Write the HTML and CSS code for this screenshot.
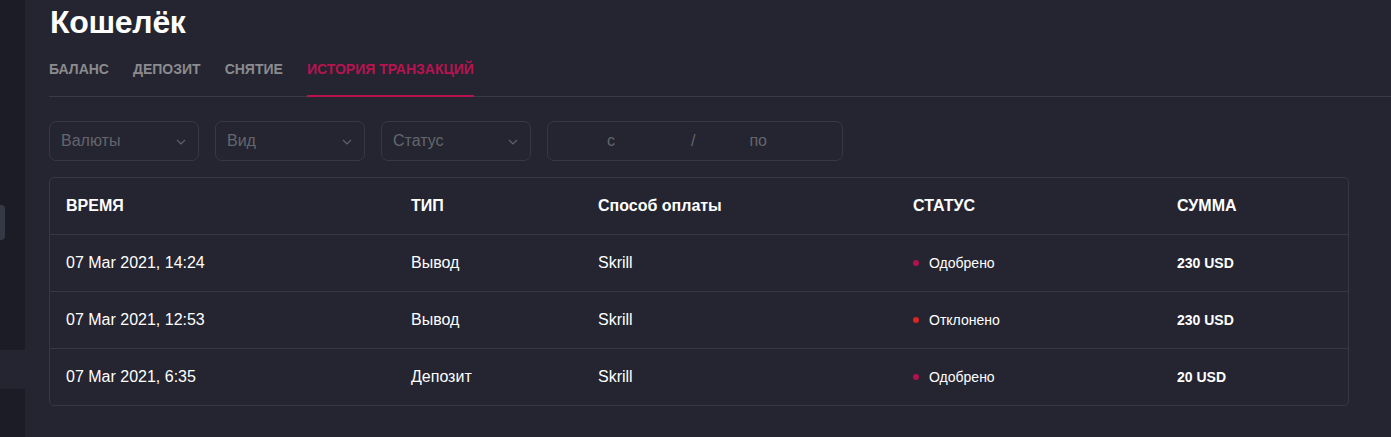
FILE: index.html
```html
<!DOCTYPE html>
<html lang="ru">
<head>
<meta charset="utf-8">
<link rel="stylesheet" href="styles.css">
</head>
<body>
<div class="app">
  <aside class="sidebar">
    <div class="side-top"></div>
    <div class="side-gap"></div>
    <div class="side-bottom"></div>
    <span class="side-pill"></span>
  </aside>
  <main class="main">
    <h1 class="title">Кошелёк</h1>
    <nav class="tabs">
      <a class="tab">Баланс</a>
      <a class="tab">Депозит</a>
      <a class="tab">Снятие</a>
      <a class="tab active">История транзакций</a>
    </nav>
    <div class="filters">
      <div class="select"><span>Валюты</span><svg class="chev" viewBox="0 0 10 6" width="10" height="6"><path d="M1 1l4 4 4-4" fill="none" stroke="#5f616b" stroke-width="1.2"/></svg></div>
      <div class="select"><span>Вид</span><svg class="chev" viewBox="0 0 10 6" width="10" height="6"><path d="M1 1l4 4 4-4" fill="none" stroke="#5f616b" stroke-width="1.2"/></svg></div>
      <div class="select"><span>Статус</span><svg class="chev" viewBox="0 0 10 6" width="10" height="6"><path d="M1 1l4 4 4-4" fill="none" stroke="#5f616b" stroke-width="1.2"/></svg></div>
      <div class="range"><span class="from">с</span><span class="sep">/</span><span class="to">по</span></div>
    </div>
    <div class="table">
      <div class="row head">
        <div>ВРЕМЯ</div><div>ТИП</div><div>Способ оплаты</div><div>СТАТУС</div><div>СУММА</div>
      </div>
      <div class="row">
        <div>07 Mar 2021, 14:24</div><div>Вывод</div><div>Skrill</div><div class="status"><i class="dot ok"></i>Одобрено</div><div class="sum">230 USD</div>
      </div>
      <div class="row">
        <div>07 Mar 2021, 12:53</div><div>Вывод</div><div>Skrill</div><div class="status"><i class="dot bad"></i>Отклонено</div><div class="sum">230 USD</div>
      </div>
      <div class="row">
        <div>07 Mar 2021, 6:35</div><div>Депозит</div><div>Skrill</div><div class="status"><i class="dot ok"></i>Одобрено</div><div class="sum">20 USD</div>
      </div>
    </div>
  </main>
</div>
</body>
</html>
```
FILE: styles.css
```css
* { box-sizing: border-box; }
html, body { margin: 0; padding: 0; }
body {
  background: #242531;
  font-family: "Liberation Sans", Arial, sans-serif;
  color: #ffffff;
  width: 1391px;
  height: 437px;
  overflow: hidden;
}
.app { display: flex; height: 437px; }
.sidebar {
  width: 25px;
  flex: none;
  display: flex;
  flex-direction: column;
  position: relative;
}
.side-top { height: 350px; background: #1b1c25; }
.side-gap { height: 39px; background: #242531; }
.side-bottom { flex: 1; background: #1b1c25; }
.side-pill {
  position: absolute;
  left: 0; top: 205px;
  width: 5px; height: 35px;
  background: #353845;
  border-radius: 0 4px 4px 0;
}
.main {
  flex: 1;
  padding: 0 0 0 24px;
}
.title {
  margin: 0;
  padding-top: 4px;
  font-size: 32px;
  line-height: 36px;
  font-weight: 700;
  padding-left: 1px;
  letter-spacing: -0.3px;
}
.tabs {
  display: flex;
  gap: 24px;
  margin-top: 14px;
  border-bottom: 1px solid #393a47;
}
.tab {
  font-size: 14px;
  font-weight: 700;
  text-transform: uppercase;
  color: #8b8b8f;
  padding: 7px 0 18px;
  line-height: 16px;
  border-bottom: 2px solid transparent;
  margin-bottom: -1px;
}
.tab.active { color: #b8134f; border-bottom-color: #b8134f; }
.filters {
  display: flex;
  gap: 16px;
  margin-top: 24px;
}
.select, .range {
  height: 40px;
  border: 1px solid #363845;
  border-radius: 7px;
  display: flex;
  align-items: center;
  color: #64656c;
  font-size: 16px;
}
.select {
  width: 150px;
  padding: 0 12px 0 11px;
  justify-content: space-between;
}
.chev { margin-top: 1px; }
.range { width: 296px; }
.range .from { margin-left: 59px; }
.range .sep { margin-left: 76px; }
.range .to { margin-left: 54px; }
.table {
  margin-top: 16px;
  width: 1300px;
  border: 1px solid #363845;
  border-radius: 5px;
}
.row {
  display: grid;
  grid-template-columns: 345px 187px 315px 264px 1fr;
  padding-left: 16px;
  height: 57px;
  align-items: center;
  font-size: 16px;
  border-top: 1px solid #363845;
}
.row:first-child { border-top: none; height: 56px; }
.row.head { font-weight: 700; font-size: 16px; }
.status { font-size: 14px; display: flex; align-items: center; }
.dot {
  width: 6px; height: 6px; border-radius: 50%;
  margin: 0 10px 0 0;
  display: inline-block;
}
.dot.ok { background: #b3124e; }
.dot.bad { background: #d8281e; }
.sum { font-weight: 700; font-size: 14px; }
```
